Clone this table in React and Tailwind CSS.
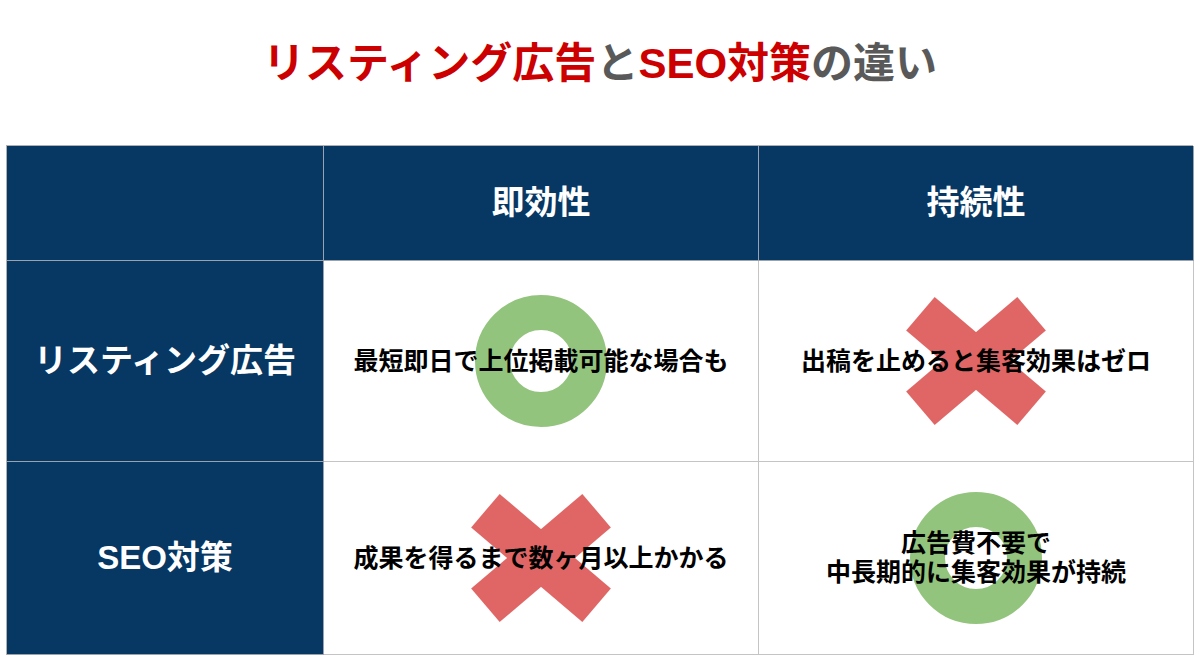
import React from "react";

const font = { fontFamily: '"Liberation Sans", "Noto Sans CJK JP", sans-serif' };

const Ring = () => (
  <svg width="132" height="132" viewBox="0 0 132 132">
    <circle cx="66" cy="66" r="48.5" fill="none" stroke="#93c47d" strokeWidth="35" />
  </svg>
);

const Cross = () => (
  <svg width="142" height="130" viewBox="0 0 142 130">
    <g transform="translate(71 65)">
      <rect x="-73" y="-22" width="146" height="44" fill="#e06666" transform="rotate(40.4)" />
      <rect x="-73" y="-22" width="146" height="44" fill="#e06666" transform="rotate(-40.4)" />
    </g>
  </svg>
);

const HeadCell = ({ children }) => (
  <div className="flex items-center justify-center bg-[#073763] border-r border-b border-[#9aa3ad] text-white text-[33px] font-bold">
    {children}
  </div>
);

const BodyCell = ({ mark, children }) => (
  <div className="grid place-items-center bg-white border-r border-b border-[#c4c4c4]">
    <div className="[grid-area:1/1] flex items-center justify-center">
      {mark === "ok" ? <Ring /> : <Cross />}
    </div>
    <div className="[grid-area:1/1] z-10 text-center text-black text-[25px] font-bold leading-[29px]">
      {children}
    </div>
  </div>
);

export default function App() {
  return (
    <div className="w-[1200px] h-[671px] bg-white overflow-hidden" style={font}>
      <div className="h-[145px] pb-[17px] flex items-center justify-center">
        <h1 className="text-[42px] font-bold leading-none">
          <span className="text-[#cc0000]">リスティング広告</span>
          <span className="text-[#595959]">と</span>
          <span className="text-[#cc0000]">SEO対策</span>
          <span className="text-[#595959]">の違い</span>
        </h1>
      </div>

      <div className="ml-[6px] w-[1187px] grid grid-cols-[317px_435px_435px] grid-rows-[115px_201px_193px] border-l border-t border-[#b0b0b0]">
        <HeadCell></HeadCell>
        <HeadCell>即効性</HeadCell>
        <HeadCell>持続性</HeadCell>

        <HeadCell>リスティング広告</HeadCell>
        <BodyCell mark="ok">最短即日で上位掲載可能な場合も</BodyCell>
        <BodyCell mark="ng">出稿を止めると集客効果はゼロ</BodyCell>

        <HeadCell>SEO対策</HeadCell>
        <BodyCell mark="ng">成果を得るまで数ヶ月以上かかる</BodyCell>
        <BodyCell mark="ok">
          広告費不要で
          <br />
          中長期的に集客効果が持続
        </BodyCell>
      </div>
    </div>
  );
}
